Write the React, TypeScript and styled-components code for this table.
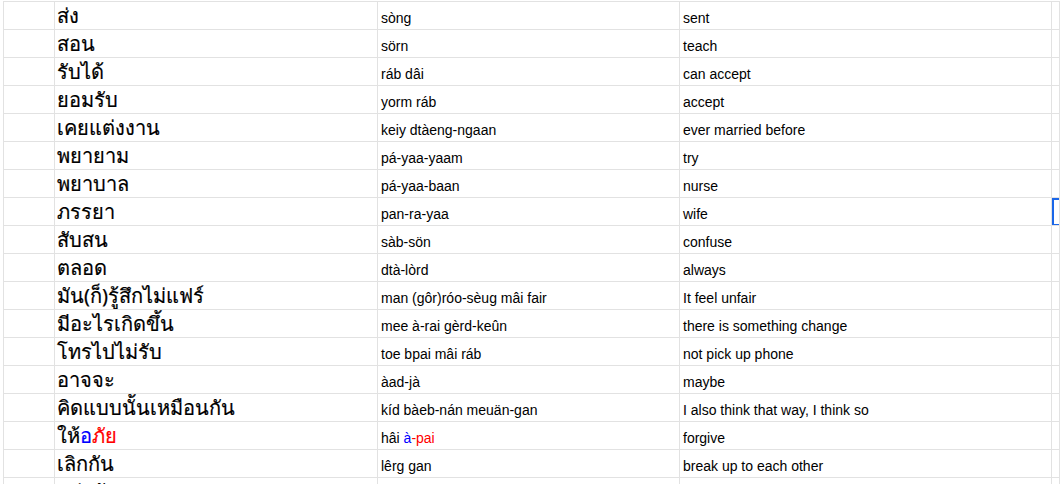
import {FC, ReactNode} from "react";
import styled, {createGlobalStyle} from "styled-components";

const GlobalStyle = createGlobalStyle`
  html, body {
    margin: 0;
    padding: 0;
    background: #ffffff;
    overflow: hidden;
  }
`

const Sheet = styled.div`
  width: 1060px;
  height: 484px;
  overflow: hidden;
  padding-top: 1px;
  padding-left: 3px;
  box-sizing: border-box;
`

const Grid = styled.div`
  border-top: 1px solid #e2e2e2;
  border-left: 1px solid #e2e2e2;
`

const Row = styled.div`
  display: grid;
  grid-template-columns: 51px 323px 302px 372px 1fr;
  height: 28px;
`

const Cell = styled.div<{ $selected?: boolean }>`
  display: flex;
  align-items: flex-end;
  box-sizing: border-box;
  border-right: 1px solid #e2e2e2;
  border-bottom: 1px solid #e2e2e2;
  padding: 0 3px 2px 3px;
  white-space: pre;
  overflow: hidden;
  font-family: "Liberation Sans", Arial, sans-serif;
  font-size: 14px;
  line-height: 17px;
  color: #000000;

  ${({$selected}) => $selected && `
    box-shadow: inset 2px 0 0 #1a66e8, inset 0 2px 0 #1a66e8, inset 0 -1px 0 #1a66e8;
  `}
`

const ThaiCell = styled(Cell)`
  font-family: "Noto Sans", "Liberation Sans", sans-serif;
  font-size: 20px;
  line-height: 24px;
  -webkit-text-stroke: 0.2px currentColor;
  padding: 0 2px 1px 2px;
  overflow: visible;
`

const Text = styled.span`
  display: block;
`

const Tone = styled.span<{ $color: string }>`
  color: ${({$color}) => $color};
`

type Entry = {
    thai: ReactNode
    roman: ReactNode
    english: string
}

const entries: Entry[] = [
    {thai: "ส่ง", roman: "sòng", english: "sent"},
    {thai: "สอน", roman: "sörn", english: "teach"},
    {thai: "รับได้", roman: "ráb dâi", english: "can accept"},
    {thai: "ยอมรับ", roman: "yorm ráb", english: "accept"},
    {thai: "เคยแต่งงาน", roman: "keiy dtàeng-ngaan", english: "ever married before"},
    {thai: "พยายาม", roman: "pá-yaa-yaam", english: "try"},
    {thai: "พยาบาล", roman: "pá-yaa-baan", english: "nurse"},
    {thai: "ภรรยา", roman: "pan-ra-yaa", english: "wife"},
    {thai: "สับสน", roman: "sàb-sön", english: "confuse"},
    {thai: "ตลอด", roman: "dtà-lòrd", english: "always"},
    {thai: "มัน(ก็)รู้สึกไม่แฟร์", roman: "man (gôr)róo-sèug mâi fair", english: "It feel unfair"},
    {thai: "มีอะไรเกิดขึ้น", roman: "mee à-rai gèrd-keûn", english: "there is something change"},
    {thai: "โทรไปไม่รับ", roman: "toe bpai mâi ráb", english: "not pick up phone"},
    {thai: "อาจจะ", roman: "àad-jà", english: "maybe"},
    {thai: "คิดแบบนั้นเหมือนกัน", roman: "kíd bàeb-nán meuän-gan", english: "I also think that way, I think so"},
    {
        thai: <>ให้<Tone $color="#0000ff">อ</Tone><Tone $color="#ff0000">ภัย</Tone></>,
        roman: <>hâi <Tone $color="#0000ff">à</Tone><Tone $color="#ff0000">-pai</Tone></>,
        english: "forgive",
    },
    {thai: "เลิกกัน", roman: "lêrg gan", english: "break up to each other"},
    {thai: "หย่ากัน", roman: "", english: ""},
]

// the selected cell sits in the last column on the "wife" row
const SELECTED_ROW = 7

const App: FC = () => {
    return (
        <>
            <GlobalStyle/>
            <Sheet>
                <Grid>
                    {entries.map((entry, i) => (
                        <Row key={i}>
                            <Cell/>
                            <ThaiCell><Text>{entry.thai}</Text></ThaiCell>
                            <Cell><Text>{entry.roman}</Text></Cell>
                            <Cell><Text>{entry.english}</Text></Cell>
                            <Cell $selected={i === SELECTED_ROW}/>
                        </Row>
                    ))}
                </Grid>
            </Sheet>
        </>
    )
}

export default App
